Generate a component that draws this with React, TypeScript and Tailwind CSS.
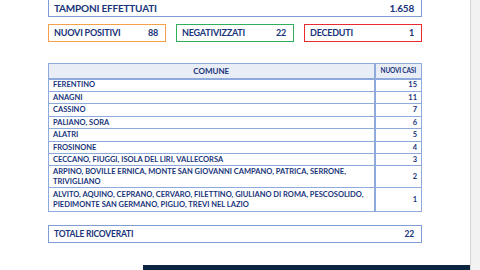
const rows: { name: React.ReactNode; n: number; h: string }[] = [
  { name: "FERENTINO", n: 15, h: "h-[13px]" },
  { name: "ANAGNI", n: 11, h: "h-[12px]" },
  { name: "CASSINO", n: 7, h: "h-[13px]" },
  { name: "PALIANO, SORA", n: 6, h: "h-[12px]" },
  { name: "ALATRI", n: 5, h: "h-[13px]" },
  { name: "FROSINONE", n: 4, h: "h-[12px]" },
  { name: "CECCANO, FIUGGI, ISOLA DEL LIRI, VALLECORSA", n: 3, h: "h-[12px]" },
  {
    name: (
      <>
        ARPINO, BOVILLE ERNICA, MONTE SAN GIOVANNI CAMPANO, PATRICA, SERRONE,
        <br />
        TRIVIGLIANO
      </>
    ),
    n: 2,
    h: "h-[22px]",
  },
  {
    name: (
      <>
        ALVITO, AQUINO, CEPRANO, CERVARO, FILETTINO, GIULIANO DI ROMA, PESCOSOLIDO,
        <br />
        PIEDIMONTE SAN GERMANO, PIGLIO, TREVI NEL LAZIO
      </>
    ),
    n: 1,
    h: "h-[24px]",
  },
]

function StatBox({ label, value, border }: { label: string; value: string; border: string }) {
  return (
    <div className={`flex h-[18px] items-center justify-between border px-[5px] text-[9px] ${border}`}>
      <span>{label}</span>
      <span className="pr-[2px]">{value}</span>
    </div>
  )
}

export default function App() {
  return (
    <div
      className="flex h-[270px] w-[480px] overflow-hidden bg-white font-bold text-[#19347a]"
      style={{ fontFamily: "Lato, 'Liberation Sans', sans-serif" }}
    >
      <div className="flex w-[470px] flex-col bg-white">
        <div className="px-[48px]">
          {/* Tamponi */}
          <div className="-mt-[3px] flex h-[20px] items-center justify-between border border-[#7d9dd4] px-[5px] pt-[2px] text-[10px] tracking-[-0.2px]">
            <span>TAMPONI EFFETTUATI</span>
            <span className="pr-[2px]">1.658</span>
          </div>

          <div className="mt-[7px] grid grid-cols-3 gap-[10px] tracking-[-0.2px]">
            <StatBox label="NUOVI POSITIVI" value="88" border="border-[#f6a14a]" />
            <StatBox label="NEGATIVIZZATI" value="22" border="border-[#2fae5c]" />
            <StatBox label="DECEDUTI" value="1" border="border-[#e92a2e]" />
          </div>

          {/* Comuni */}
          <table className="mt-[21px] w-full border-collapse border border-[#8eaadc] text-[7.5px] leading-[10px]">
            <thead>
              <tr className="h-[15px] bg-[#e8edf6]">
                <th className="border-b-2 border-[#8eaadc] text-center text-[8px] font-bold">COMUNE</th>
                <th className="w-[47px] border-b-2 border-l-2 border-[#8eaadc] text-center text-[6.5px] font-bold tracking-[-0.2px]">
                  NUOVI CASI
                </th>
              </tr>
            </thead>
            <tbody>
              {rows.map((r, i) => (
                <tr key={i} className={`${r.h} border-b border-[#8eaadc]`}>
                  <td className="pl-[4px] text-left">{r.name}</td>
                  <td className="border-l-2 border-[#8eaadc] pr-[4px] text-right">{r.n}</td>
                </tr>
              ))}
            </tbody>
          </table>

          <div className="mt-[13px] flex h-[18px] items-center justify-between border border-[#7d9dd4] px-[5px] text-[8.5px] tracking-[-0.2px]">
            <span>TOTALE RICOVERATI</span>
            <span className="pr-[2px]">22</span>
          </div>
        </div>

        <div className="mt-auto ml-[143px] h-[5px] bg-[#0c2641]" />
      </div>
      <div className="w-[10px] border-l border-[#d6d6d6] bg-[#f2f2f2]" />
    </div>
  )
}
